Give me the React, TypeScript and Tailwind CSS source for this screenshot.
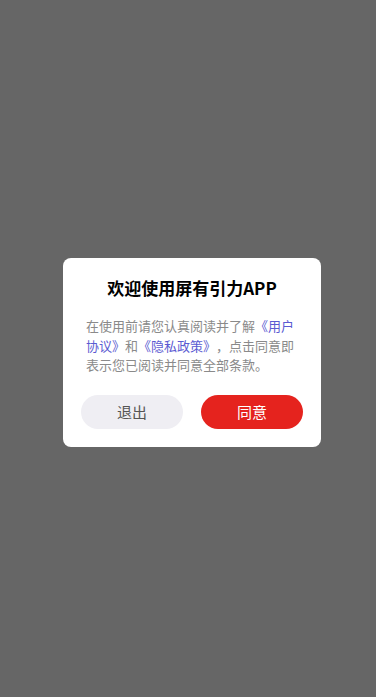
export default function App() {
  return (
    <div
      lang="zh-CN"
      className="w-[376px] h-[697px] bg-[#666666] flex items-center justify-center pt-[8px] pl-[8px] [text-spacing-trim:space-all]"
      style={{ fontFamily: '"Noto Sans CJK SC", "Noto Sans", sans-serif' }}
    >
      <div className="w-[258px] bg-white rounded-[8px] pt-[18px] pb-[18px] px-[18px]">
        <h2 className="text-[17px] leading-[24px] font-bold text-black text-center">欢迎使用屏有引力APP</h2>
        <p className="mt-[16px] px-[5px] text-[13px] leading-[19.5px] text-[#8a8a8a] [font-feature-settings:'fwid'_0]">
          在使用前请您认真阅读并了解<span className="text-[#5b5bd2]">《用户协议》</span>和<span className="text-[#5b5bd2]">《隐私政策》</span>，点击同意即表示您已阅读并同意全部条款。
        </p>
        <div className="mt-[20px] flex gap-[18px]">
          <button className="flex-1 h-[34px] rounded-full bg-[#efeef3] text-[15px] text-[#555555]">退出</button>
          <button className="flex-1 h-[34px] rounded-full bg-[#e5231e] text-[15px] text-white">同意</button>
        </div>
      </div>
    </div>
  )
}
